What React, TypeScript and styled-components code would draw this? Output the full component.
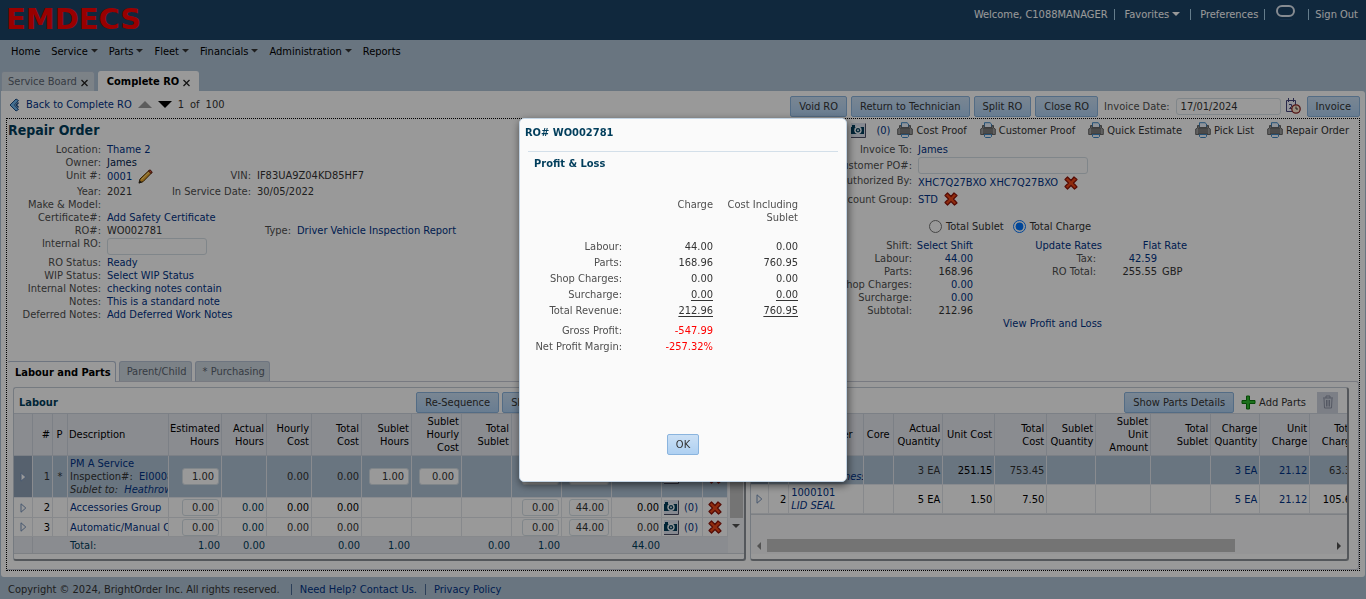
import React from "react";
import styled, { createGlobalStyle, css } from "styled-components";

const GlobalStyle = createGlobalStyle`
  * { box-sizing: border-box; }
  body {
    margin: 0;
    background: #afc3d6;
    color: #333;
    font-family: "DejaVu Sans Condensed", "Noto Sans", "Liberation Sans", sans-serif;
    font-size: 11px;
    line-height: 13px;
  }
  input, button { font: inherit; color: inherit; }
  svg { display: block; flex: none; }
  table { border-collapse: separate; border-spacing: 0; }
`;

const INK = "#333333";
const LINK = "#003286";
const HEADING = "#003d5b";

/* ---------- shared parts ---------- */

const Link = styled.a<{ $tone?: string }>`
  color: ${(p) => p.$tone ?? LINK};
  text-decoration: none;
  white-space: nowrap;
`;

const Button = styled.button`
  height: 21px;
  padding: 0 8px;
  border: 1px solid #8ab4de;
  border-radius: 2px;
  background: linear-gradient(#cbe0f5, #aed0f2);
  color: ${INK};
  white-space: nowrap;
`;

const IconButton = styled.button`
  display: inline-flex;
  padding: 0;
  border: 0;
  background: none;
`;

const TextBox = styled.input<{ $width: number; $right?: boolean }>`
  width: ${(p) => p.$width}px;
  height: 17px;
  padding: 0 4px;
  border: 1px solid #d6dfe6;
  border-radius: 3px;
  background: #fff;
  color: ${INK};
  text-align: ${(p) => (p.$right ? "right" : "left")};
  vertical-align: top;
`;

/* ---------- icons ---------- */

const Printer = () => (
  <svg width="16" height="16" viewBox="0 0 16 16">
    <path d="M4.500 6V.7h5.500L11.500 2v4z" fill="#eef6ff" stroke="#3f88c5" />
    <path d="M2.500 3.500h1.500v2h8v-2h1.500V6l1.800 1v5.500H.7V7l1.800-1z" fill="#a3a3a3" stroke="#666" />
    <path d="M3 6h10v6H3z" fill="#6f6f6f" />
    <path d="M3 8h10M3 10h10" stroke="#8f8f8f" />
    <path d="M4.500 12.500h7v2l-1 1h-5l-1-1z" fill="#f3f9ff" stroke="#3f88c5" />
  </svg>
);

const Camera = () => (
  <svg width="15" height="15" viewBox="0 0 15 15">
    <path d="M0 0h14v14h-14z" fill="#dfe5f0" />
    <path d="M0 14.500h14.500v-14" fill="none" stroke="#4c4f66" />
    <path d="M0 4h1V2h3v2h9v7H0z" fill="#003d5b" />
    <circle cx="7" cy="7.300" r="3.700" fill="#f3f7fb" />
    <circle cx="7" cy="7.300" r="2.200" fill="#003d5b" />
    <circle cx="7" cy="7.300" r="1" fill="#dce8f0" />
  </svg>
);

const RedCross = () => (
  <svg width="14" height="14" viewBox="0 0 14 14">
    <path
      d="M3.500 1L7 4.500 10 1l3 2.500L9.500 7l3.500 4-2.500 2L7 9.500 3.500 13 1 10.500 4.500 7 1 3.500z"
      fill="#f04a1a"
      stroke="#8e1208"
      strokeWidth="1.200"
      strokeLinejoin="round"
    />
  </svg>
);

const Pencil = () => (
  <svg width="15" height="15" viewBox="0 0 15 15">
    <path d="M1 14l1-4L11 1.500 13.500 4 5 12.700z" fill="#f0ab2d" stroke="#4b2f05" />
    <path d="M10.500 2L12 .8 14.300 3 13 4.500z" fill="#d8563a" stroke="#5b1a0c" />
    <path d="M3.500 10.500L11 3.300" stroke="#ffe28a" />
    <path d="M.7 14.500l1-3L4 13.300z" fill="#222" />
  </svg>
);

const CalendarClock = () => (
  <svg width="16" height="16" viewBox="0 0 16 16">
    <path d="M1.500 2.500h9v11h-9z" fill="#f5f5ff" stroke="#44447c" />
    <path d="M3.500 0v4M8.500 0v4" stroke="#44447c" />
    <path d="M4 6.500h2.500v2L4.500 10.500H7" fill="none" stroke="#44447c" />
    <circle cx="11" cy="11" r="4.200" fill="#ffe9d2" stroke="#8c2424" strokeWidth="1.300" />
    <path d="M11 8.500V11h2" fill="none" stroke="#333" />
  </svg>
);

const BackArrow = () => (
  <svg width="11" height="14" viewBox="0 0 11 14">
    <path d="M7 1L1 7l6 6 2.500-1.500L5.500 7l4-4.500z" fill="#6fb7f0" stroke="#1c4f88" />
    <path d="M9.500 4.500L7.300 7l2.200 2.500" fill="none" stroke="#1c4f88" strokeWidth="1.500" />
  </svg>
);

const Plus = () => (
  <svg width="15" height="15" viewBox="0 0 15 15">
    <path d="M5.500 1h3v4.500H14v3H8.500V14h-3V8.500H1v-3h4.500z" fill="#2fbb2f" stroke="#0b7a0b" />
  </svg>
);

const Bin = () => (
  <svg width="12" height="14" viewBox="0 0 12 14" fill="none" stroke="#8d93a5">
    <path d="M1 3h10M4 3V1h4v2M2 3.500l.5 9.500h7l.5-9.500M4.500 5v6.500M6 5v6.500M7.500 5v6.500" />
  </svg>
);

const Bubble = () => (
  <svg width="20" height="18" viewBox="0 0 20 18" fill="none">
    <rect x="1" y="1" width="17" height="10" rx="5" stroke="#dfe8f2" strokeWidth="2" />
    <path d="M4 14.500h12" stroke="#26507a" />
  </svg>
);

const Cross = () => (
  <svg width="7" height="11" viewBox="0 0 7 11">
    <path d="M.5 4l6 6M6.500 4l-6 6" stroke="#222" strokeWidth="1.300" />
  </svg>
);

type Dir = "up" | "down" | "left" | "right";
const points: Record<Dir, string> = {
  up: "0,8 16,8 8,0",
  down: "0,0 16,0 8,8",
  left: "8,0 8,16 0,8",
  right: "0,0 0,16 8,8",
};
const Arrow = ({ dir, size, fill }: { dir: Dir; size: number; fill: string }) => {
  const flat = dir === "up" || dir === "down";
  return (
    <svg
      width={flat ? size : size / 2}
      height={flat ? size / 2 : size}
      viewBox={flat ? "0 0 16 8" : "0 0 8 16"}
    >
      <polygon points={points[dir]} fill={fill} />
    </svg>
  );
};

const Disclosure = () => (
  <svg width="7" height="10" viewBox="0 0 7 10">
    <path d="M1 .8L5.800 5 1 9.200z" fill="#fff" stroke="#7590b8" />
  </svg>
);

/* ---------- frame ---------- */

const Page = styled.div`
  display: flex;
  flex-direction: column;
  min-height: 100vh;
`;

const TopBar = styled.header`
  display: flex;
  justify-content: space-between;
  height: 40px;
  padding: 0 8px 0 6px;
  background: #1c4367;
`;

const Logo = styled.div`
  color: #f00;
  font-family: "DejaVu Sans", sans-serif;
  font-size: 29px;
  font-weight: bold;
  line-height: 38px;
`;

const Account = styled.div`
  display: flex;
  align-items: center;
  gap: 6px;
  height: 28px;
  color: #fff;
`;

const Bar = styled.span<{ $tone?: string }>`
  width: 1px;
  height: 11px;
  background: ${(p) => p.$tone ?? "#a9d0ea"};
`;

const MenuItem = styled.a`
  display: flex;
  align-items: center;
  gap: 3px;
  color: inherit;
  text-decoration: none;
  white-space: nowrap;
`;

const Nav = styled.nav`
  display: flex;
  align-items: center;
  gap: 11px;
  height: 22px;
  padding: 0 11px;
  color: #000;
`;

const PageTabs = styled.div`
  display: flex;
  gap: 3px;
  margin-top: 9px;
  padding-left: 1px;
`;

const Tab = styled.button<{ $active?: boolean }>`
  display: flex;
  align-items: center;
  gap: 4px;
  height: 20px;
  padding: 0 6px;
  border: 1px solid #b5c4d6;
  border-bottom: 0;
  border-radius: 3px 3px 0 0;
  background: #cfd9e1;
  color: #5b6470;
  white-space: nowrap;
  ${(p) =>
    p.$active &&
    css`
      padding: 0 8px;
      border-color: #fff;
      background: #fff;
      color: #000;
      font-weight: bold;
    `}
`;

const SubTab = styled(Tab)`
  padding: 0 4px 0 7px;
  border-color: #b8c4d6;
  ${(p) =>
    p.$active &&
    css`
      height: 21px;
      margin-bottom: -1px;
      border-left-color: #fff;
    `}
`;

const Sheet = styled.main`
  flex: 1;
  margin: 0 1px;
  padding: 0 5px 6px;
  border-radius: 0 3px 3px 3px;
  background: #fff;
`;

const ActionRow = styled.div`
  display: flex;
  align-items: center;
  justify-content: space-between;
  height: 27px;
  padding-left: 3px;
`;

const Group = styled.div<{ $gap: number; $lead?: number }>`
  display: flex;
  align-items: center;
  gap: ${(p) => p.$gap}px;
  margin-left: ${(p) => p.$lead ?? 0}px;
`;

const Actions = styled(Group)`
  padding-top: 3px;
`;

const FieldLabel = styled.label`
  color: #4f4f4f;
  white-space: nowrap;
`;

const OrderBox = styled.section`
  border: 1px dotted #000;
`;

/* ---------- order summary ---------- */

const Summary = styled.div`
  display: flex;
  justify-content: space-between;
  min-height: 242px;
`;

const Column = styled.div<{ $width?: number }>`
  ${(p) => (p.$width ? `flex: none; width: ${p.$width}px;` : "flex: 1;")}
`;

const Title = styled.h1`
  margin: 0;
  padding: 0 0 2px 1px;
  color: ${HEADING};
  font-size: 14px;
  line-height: 22px;
`;

const Row = styled.div<{ $label: number; $tall?: number }>`
  display: grid;
  grid-template-columns: ${(p) => p.$label}px 1fr;
  column-gap: 6px;
  min-height: ${(p) => p.$tall ?? 13}px;
`;

const RowLabel = styled.span<{ $middle?: boolean }>`
  align-self: ${(p) => (p.$middle ? "center" : "start")};
  color: #4f4f4f;
  text-align: right;
  white-space: nowrap;
`;

const RowValue = styled.div<{ $middle?: boolean }>`
  display: flex;
  align-items: ${(p) => (p.$middle ? "center" : "flex-start")};
  gap: 6px;
  white-space: nowrap;
`;

const Cell = styled.span<{ $width: number; $right?: boolean; $tone?: string }>`
  display: flex;
  align-items: center;
  gap: 6px;
  width: ${(p) => p.$width}px;
  justify-content: ${(p) => (p.$right ? "flex-end" : "flex-start")};
  color: ${(p) => p.$tone ?? INK};
`;

const PrintBar = styled.div`
  display: flex;
  align-items: center;
  justify-content: flex-end;
  gap: 13px;
  height: 24px;
  padding: 0 10px 2px 0;
`;

const PrintLink = styled.a`
  display: flex;
  align-items: center;
  gap: 3px;
  color: ${INK};
  text-decoration: none;
  white-space: nowrap;
`;

const Radios = styled.div`
  display: flex;
  gap: 9px;
  padding: 13px 0 6px 116px;
  color: ${INK};

  label { display: flex; align-items: center; gap: 4px; height: 13px; }
  input { width: 13px; height: 13px; margin: 0; accent-color: #0075ff; }
`;

const Totals = styled.table`
  table-layout: fixed;
  width: 374px;

  td { padding: 0; text-align: right; white-space: nowrap; height: 13px; color: ${INK}; }
  td:first-child, td.label { color: #4f4f4f; }
  td.link { color: ${LINK}; }
  td.unit { padding-left: 5px; text-align: left; }
`;

/* ---------- labour and parts ---------- */

const SubTabs = styled.div`
  display: flex;
  gap: 3px;
  position: relative;
  z-index: 0;
`;

const TabBox = styled.div`
  display: flex;
  gap: 4px;
  padding: 5px 9px 8px 6px;
  border: 1px solid #c8ccd8;
  border-left: 0;
  border-radius: 0 3px 3px 0;
`;

const Panel = styled.section<{ $grow: number }>`
  flex: ${(p) => p.$grow} 1 0;
  min-width: 0;
  padding-bottom: 5px;
  overflow: hidden;
  border: 1px solid #c4ccd6;
  border-right: 2px solid #8d9298;
  border-bottom: 2px solid #8d9298;
  border-radius: 3px;
`;

const PanelHead = styled.div`
  display: flex;
  align-items: center;
  justify-content: space-between;
  height: 25px;
  padding: 3px 9px 0 5px;

  h2 { margin: 0; color: ${HEADING}; font-size: 11px; }
`;

const BinButton = styled.button`
  display: flex;
  align-items: center;
  justify-content: center;
  width: 21px;
  height: 21px;
  padding: 0;
  border: 0;
  background: #cfd4e0;
`;

const GridArea = styled.div`
  display: flex;
  overflow: hidden;
  border-bottom: 1px solid #d0d5dd;
`;

const Grid = styled.table<{ $width: number }>`
  flex: none;
  table-layout: fixed;
  width: ${(p) => p.$width}px;
`;

const Th = styled.th<{ $width: number; $align?: string }>`
  width: ${(p) => p.$width}px;
  height: 43px;
  padding: 0 2px 0 1px;
  border: solid #cfd6df;
  border-width: 1px 1px 1px 0;
  background: #e7e9f0;
  color: #000;
  font-weight: normal;
  text-align: ${(p) => p.$align ?? "right"};
`;

const Tr = styled.tr<{ $height: number; $kind?: "selected" | "total" }>`
  height: ${(p) => p.$height}px;
  ${(p) => p.$kind === "selected" && "background: #afc3d6;"}
  ${(p) => p.$kind === "total" && "background: #e7e9f0;"}
  td { border-color: ${(p) => (p.$kind === "selected" ? "#e4e8ee" : "#e2e5ea")}; }
  ${(p) =>
    p.$kind === "total" &&
    css`
      td { border: 0; color: ${HEADING}; }
      td:first-child { border-right: 1px solid #d3d8df; }
    `}
  ${(p) => p.$kind === "selected" && "td:first-child { background: #8fa2b8; }"}
`;

const Td = styled.td<{ $align?: string; $tone?: string }>`
  padding: 0 2px;
  overflow: hidden;
  border: solid;
  border-width: 0 1px 1px 0;
  color: ${(p) => p.$tone ?? INK};
  text-align: ${(p) => p.$align ?? "right"};
  white-space: nowrap;
  > svg { margin: 0 auto; }
  > button { vertical-align: middle; }
`;

const Italic = styled.span`
  display: block;
  font-style: italic;
`;

const ScrollColumn = styled.div`
  display: flex;
  flex: 1;
  flex-direction: column;
  align-items: center;
  background: #f1f2f5;
`;

const ScrollHead = styled.div`
  width: 100%;
  height: 43px;
  border-top: 1px solid #cfd6df;
  border-bottom: 1px solid #cfd6df;
  background: #e7e9f0;
`;

const VThumb = styled.div`
  width: 13px;
  height: 62px;
  margin-bottom: 6px;
  background: #c1c1c1;
`;

const HScroll = styled.div`
  display: flex;
  align-items: center;
  height: 39px;
  padding: 24px 6px 2px;
  background: #f8f9fa;
`;

const HTrack = styled.div`
  flex: 1;
  margin: 0 6px;
`;

const HThumb = styled.div`
  width: 83%;
  height: 13px;
  background: #c1c1c1;
`;

/* ---------- footer and dialog ---------- */

const Footer = styled.footer`
  display: flex;
  align-items: center;
  gap: 8px;
  height: 22px;
  padding: 3px 8px 0;
  color: #333;
`;

const Backdrop = styled.div`
  position: fixed;
  inset: 0;
  display: flex;
  align-items: center;
  justify-content: center;
  background: rgba(0, 0, 0, 0.4);
`;

const Dialog = styled.div`
  display: flex;
  flex-direction: column;
  width: 328px;
  height: 364px;
  padding: 0 8px;
  border: 1px solid #c3d4e4;
  border-radius: 5px;
  background: #fafafa;
  box-shadow: 1px 3px 8px rgba(0, 0, 0, 0.6);
`;

const DialogTitle = styled.h2`
  margin: 0 0 4px -3px;
  color: ${HEADING};
  font-size: 11px;
  line-height: 28px;
`;

const DialogHeading = styled.h3`
  margin: 0 0 28px;
  padding: 5px 6px 0;
  border-top: 1px solid #d3dfe9;
  color: ${HEADING};
  font-size: 11px;
  line-height: 13px;
`;

const PLTable = styled.table`
  table-layout: fixed;
  width: 270px;

  th, td { padding: 0; height: 16px; text-align: right; font-weight: normal; white-space: nowrap; }
  th { color: #4f4f4f; }
  thead th { height: 41px; vertical-align: top; }
  .gap > * { padding-top: 4px; height: 20px; }
  .line { text-decoration: underline; text-underline-offset: 2px; }
  .loss { color: #f00; }
`;

const DialogFoot = styled.div`
  display: flex;
  justify-content: center;
  margin-top: auto;
  padding-bottom: 26px;
`;

/* ---------- data ---------- */

const menus: [string, boolean][] = [
  ["Home", false],
  ["Service", true],
  ["Parts", true],
  ["Fleet", true],
  ["Financials", true],
  ["Administration", true],
  ["Reports", false],
];

const labourCols: [string, number, string?][] = [
  ["", 19],
  ["#", 20],
  ["P", 15, "center"],
  ["Description", 101, "left"],
  ["Estimated Hours", 53],
  ["Actual Hours", 45],
  ["Hourly Cost", 45],
  ["Total Cost", 50],
  ["Sublet Hours", 50],
  ["Sublet Hourly Cost", 50],
  ["Total Sublet", 50],
  ["Charge Hours", 50],
  ["Hourly Charge", 50],
  ["Total Charge", 50],
  ["", 41],
  ["", 25],
];

const partCols: [string, number, string?][] = [
  ["", 18],
  ["#", 20],
  ["Part Number", 75, "left"],
  ["Core", 30, "center"],
  ["Actual Quantity", 49],
  ["Unit Cost", 52],
  ["Total Cost", 52],
  ["Sublet Quantity", 49],
  ["Sublet Unit Amount", 55],
  ["Total Sublet", 60],
  ["Charge Quantity", 49],
  ["Unit Charge", 50],
  ["Total Charge", 50],
];

const Head = ({ cols }: { cols: [string, number, string?][] }) => (
  <thead>
    <tr>
      {cols.map(([text, width, align], i) => (
        <Th key={i} $width={width} $align={align}>
          {text}
        </Th>
      ))}
    </tr>
  </thead>
);

const Attach = () => (
  <Group $gap={5}>
    <Camera />
    <Link href="#">(0)</Link>
  </Group>
);

const Delete = () => (
  <IconButton aria-label="Delete">
    <RedCross />
  </IconButton>
);

const Hours = ({ value, width, name }: { value: string; width: number; name: string }) => (
  <TextBox $width={width} $right defaultValue={value} aria-label={name} />
);

const GroupRow = ({ n, text, height, dark }: { n: string; text: string; height: number; dark?: boolean }) => {
  const tone = dark ? "#000" : INK;
  return (
    <Tr $height={height}>
      <Td><Disclosure /></Td>
      <Td $tone="#000">{n}</Td>
      <Td />
      <Td $align="left"><Link href="#">{text}</Link></Td>
      <Td><Hours value="0.00" width={37} name="Estimated hours" /></Td>
      <Td $tone={HEADING}>0.00</Td>
      <Td $tone={tone}>0.00</Td>
      <Td $tone={tone}>0.00</Td>
      <Td />
      <Td />
      <Td />
      <Td><Hours value="0.00" width={37} name="Charge hours" /></Td>
      <Td><Hours value="44.00" width={40} name="Hourly charge" /></Td>
      <Td $tone={tone}>0.00</Td>
      <Td><Attach /></Td>
      <Td $align="center"><Delete /></Td>
    </Tr>
  );
};

const LabourPanel = () => (
  <Panel $grow={733}>
    <PanelHead>
      <h2>Labour</h2>
      <Group $gap={3}>
        <Button>Re-Sequence</Button>
        <Group $gap={9}>
          <Button>Show Labour Details</Button>
          <Group $gap={3}>
            <Plus />
            <Link href="#" $tone={INK}>Add Labour</Link>
          </Group>
          <BinButton aria-label="Delete labour"><Bin /></BinButton>
        </Group>
      </Group>
    </PanelHead>
    <GridArea>
      <Grid $width={714}>
        <Head cols={labourCols} />
        <tbody>
          <Tr $height={42} $kind="selected">
            <Td><Disclosure /></Td>
            <Td>1</Td>
            <Td $align="center">*</Td>
            <Td $align="left">
              <Link href="#">PM A Service</Link>
              <br />
              Inspection#:&nbsp; <Link href="#">EI000812</Link>
              <Italic>
                Sublet to:&nbsp; <Link href="#">Heathrow</Link>
              </Italic>
            </Td>
            <Td><Hours value="1.00" width={37} name="Estimated hours" /></Td>
            <Td />
            <Td>0.00</Td>
            <Td>0.00</Td>
            <Td><Hours value="1.00" width={40} name="Sublet hours" /></Td>
            <Td><Hours value="0.00" width={40} name="Sublet hourly cost" /></Td>
            <Td />
            <Td><Hours value="1.00" width={37} name="Charge hours" /></Td>
            <Td><Hours value="44.00" width={40} name="Hourly charge" /></Td>
            <Td>44.00</Td>
            <Td><Attach /></Td>
            <Td $align="center"><Delete /></Td>
          </Tr>
          <GroupRow n="2" text="Accessories Group" height={20} dark />
          <GroupRow n="3" text="Automatic/Manual Chassis" height={19} />
          <Tr $height={16} $kind="total">
            <Td />
            <Td />
            <Td />
            <Td $align="left">Total:</Td>
            <Td>1.00</Td>
            <Td>0.00</Td>
            <Td />
            <Td>0.00</Td>
            <Td>1.00</Td>
            <Td />
            <Td>0.00</Td>
            <Td>1.00</Td>
            <Td />
            <Td>44.00</Td>
            <Td />
            <Td />
          </Tr>
        </tbody>
      </Grid>
      <ScrollColumn aria-hidden>
        <ScrollHead />
        <VThumb />
        <Arrow dir="down" size={8} fill="#505050" />
      </ScrollColumn>
    </GridArea>
  </Panel>
);

const PartsPanel = () => (
  <Panel $grow={598}>
    <PanelHead>
      <h2>Parts</h2>
      <Group $gap={11}>
        <Group $gap={7}>
          <Button>Show Parts Details</Button>
          <Group $gap={3}>
            <Plus />
            <Link href="#" $tone={INK}>Add Parts</Link>
          </Group>
        </Group>
        <BinButton aria-label="Delete parts"><Bin /></BinButton>
      </Group>
    </PanelHead>
    <GridArea>
      <Grid $width={609}>
        <Head cols={partCols} />
        <tbody>
          <Tr $height={29} $kind="selected">
            <Td><Disclosure /></Td>
            <Td>1</Td>
            <Td $align="left" $tone={LINK}>
              1000100
              <Italic>Wiring Harness</Italic>
            </Td>
            <Td />
            <Td>3 EA</Td>
            <Td $tone="#000">251.15</Td>
            <Td>753.45</Td>
            <Td />
            <Td />
            <Td />
            <Td $tone={LINK}>3 EA</Td>
            <Td $tone={LINK}>21.12</Td>
            <Td>63.36</Td>
          </Tr>
          <Tr $height={29}>
            <Td><Disclosure /></Td>
            <Td $tone="#000">2</Td>
            <Td $align="left">
              <Link href="#">1000101</Link>
              <Italic><Link href="#">LID SEAL</Link></Italic>
            </Td>
            <Td />
            <Td $tone="#000">5 EA</Td>
            <Td $tone="#000">1.50</Td>
            <Td $tone="#000">7.50</Td>
            <Td />
            <Td />
            <Td />
            <Td $tone={LINK}>5 EA</Td>
            <Td $tone={LINK}>21.12</Td>
            <Td $tone="#000">105.60</Td>
          </Tr>
        </tbody>
      </Grid>
    </GridArea>
    <HScroll aria-hidden>
      <Arrow dir="left" size={8} fill="#8a8a8a" />
      <HTrack><HThumb /></HTrack>
      <Arrow dir="right" size={8} fill="#505050" />
    </HScroll>
  </Panel>
);

const OrderDetails = () => (
  <Column>
    <Title>Repair Order</Title>
    <Row $label={94}>
      <RowLabel>Location:</RowLabel>
      <RowValue><Link href="#">Thame 2</Link></RowValue>
    </Row>
    <Row $label={94}>
      <RowLabel>Owner:</RowLabel>
      <RowValue><Link href="#" $tone="#001d4e">James</Link></RowValue>
    </Row>
    <Row $label={94} $tall={16}>
      <RowLabel>Unit #:</RowLabel>
      <RowValue>
        <Cell $width={55}>
          <Link href="#">0001</Link>
          <IconButton aria-label="Edit unit"><Pencil /></IconButton>
        </Cell>
        <Cell $width={83} $right $tone="#4f4f4f">VIN:</Cell>
        <span>IF83UA9Z04KD85HF7</span>
      </RowValue>
    </Row>
    <Row $label={94}>
      <RowLabel>Year:</RowLabel>
      <RowValue>
        <Cell $width={55}>2021</Cell>
        <Cell $width={83} $right $tone="#4f4f4f">In Service Date:</Cell>
        <span>30/05/2022</span>
      </RowValue>
    </Row>
    <Row $label={94}>
      <RowLabel>Make &amp; Model:</RowLabel>
    </Row>
    <Row $label={94}>
      <RowLabel>Certificate#:</RowLabel>
      <RowValue><Link href="#">Add Safety Certificate</Link></RowValue>
    </Row>
    <Row $label={94}>
      <RowLabel>RO#:</RowLabel>
      <RowValue>
        <Cell $width={95}>WO002781</Cell>
        <Cell $width={83} $right $tone="#4f4f4f">Type:</Cell>
        <Link href="#">Driver Vehicle Inspection Report</Link>
      </RowValue>
    </Row>
    <Row $label={94} $tall={19}>
      <RowLabel as="label" htmlFor="internal-ro">Internal RO:</RowLabel>
      <RowValue $middle><TextBox id="internal-ro" $width={100} /></RowValue>
    </Row>
    {[
      ["RO Status:", "Ready"],
      ["WIP Status:", "Select WIP Status"],
      ["Internal Notes:", "checking notes contain"],
      ["Notes:", "This is a standard note"],
      ["Deferred Notes:", "Add Deferred Work Notes"],
    ].map(([label, value]) => (
      <Row key={label} $label={94}>
        <RowLabel>{label}</RowLabel>
        <RowValue><Link href="#">{value}</Link></RowValue>
      </Row>
    ))}
  </Column>
);

const InvoiceDetails = () => (
  <Column $width={546}>
    <PrintBar>
      <Group $gap={7}>
        <Group $gap={10}>
          <Camera />
          <Link href="#">(0)</Link>
        </Group>
        <PrintLink href="#"><Printer />Cost Proof</PrintLink>
      </Group>
      {["Customer Proof", "Quick Estimate", "Pick List", "Repair Order"].map((text) => (
        <PrintLink key={text} href="#"><Printer />{text}</PrintLink>
      ))}
    </PrintBar>
    <Row $label={99}>
      <RowLabel>Invoice To:</RowLabel>
      <RowValue><Link href="#">James</Link></RowValue>
    </Row>
    <Row $label={99} $tall={18}>
      <RowLabel as="label" $middle htmlFor="customer-po">Customer PO#:</RowLabel>
      <RowValue $middle><TextBox id="customer-po" $width={170} /></RowValue>
    </Row>
    <Row $label={99} $tall={17}>
      <RowLabel>Authorized By:</RowLabel>
      <RowValue $middle>
        <Link href="#">XHC7Q27BXO XHC7Q27BXO</Link>
        <Delete />
      </RowValue>
    </Row>
    <Row $label={99} $tall={16}>
      <RowLabel $middle>Account Group:</RowLabel>
      <RowValue $middle>
        <Link href="#">STD</Link>
        <Delete />
      </RowValue>
    </Row>
    <Radios>
      <label><input type="radio" name="total" />Total Sublet</label>
      <label><input type="radio" name="total" defaultChecked />Total Charge</label>
    </Radios>
    <Totals>
      <colgroup>
        <col style={{ width: 99 }} />
        <col style={{ width: 61 }} />
        <col style={{ width: 123 }} />
        <col style={{ width: 6 }} />
        <col style={{ width: 55 }} />
        <col style={{ width: 30 }} />
      </colgroup>
      <tbody>
        <tr>
          <td>Shift:</td>
          <td><Link href="#">Select Shift</Link></td>
          <td colSpan={2}><Link href="#">Update Rates</Link></td>
          <td colSpan={2}><Link href="#">Flat Rate</Link></td>
        </tr>
        <tr>
          <td>Labour:</td>
          <td className="link">44.00</td>
          <td className="label">Tax:</td>
          <td />
          <td className="link">42.59</td>
          <td />
        </tr>
        <tr>
          <td>Parts:</td>
          <td>168.96</td>
          <td className="label">RO Total:</td>
          <td />
          <td>255.55</td>
          <td className="unit">GBP</td>
        </tr>
        <tr>
          <td>Shop Charges:</td>
          <td className="link">0.00</td>
        </tr>
        <tr>
          <td>Surcharge:</td>
          <td className="link">0.00</td>
        </tr>
        <tr>
          <td>Subtotal:</td>
          <td>212.96</td>
        </tr>
        <tr>
          <td />
          <td />
          <td colSpan={2}><Link href="#">View Profit and Loss</Link></td>
        </tr>
      </tbody>
    </Totals>
  </Column>
);

const ProfitDialog = () => (
  <Backdrop>
    <Dialog role="dialog" aria-modal="true" aria-labelledby="pl-title">
      <DialogTitle id="pl-title">RO# WO002781</DialogTitle>
      <DialogHeading>Profit &amp; Loss</DialogHeading>
      <PLTable>
        <colgroup>
          <col style={{ width: 94 }} />
          <col style={{ width: 91 }} />
          <col style={{ width: 85 }} />
        </colgroup>
        <thead>
          <tr>
            <th />
            <th>Charge</th>
            <th>Cost Including<br />Sublet</th>
          </tr>
        </thead>
        <tbody>
          <tr><th>Labour:</th><td>44.00</td><td>0.00</td></tr>
          <tr><th>Parts:</th><td>168.96</td><td>760.95</td></tr>
          <tr><th>Shop Charges:</th><td>0.00</td><td>0.00</td></tr>
          <tr><th>Surcharge:</th><td className="line">0.00</td><td className="line">0.00</td></tr>
          <tr><th>Total Revenue:</th><td className="line">212.96</td><td className="line">760.95</td></tr>
          <tr className="gap"><th>Gross Profit:</th><td className="loss">-547.99</td><td /></tr>
          <tr><th>Net Profit Margin:</th><td className="loss">-257.32%</td><td /></tr>
        </tbody>
      </PLTable>
      <DialogFoot>
        <Button>OK</Button>
      </DialogFoot>
    </Dialog>
  </Backdrop>
);

export default function App() {
  return (
    <>
      <GlobalStyle />
      <Page>
        <TopBar>
          <Logo>EMDECS</Logo>
          <Account>
            <span>Welcome, C1088MANAGER</span>
            <Bar />
            <Group $gap={10} $lead={4}>
              <MenuItem href="#">Favorites <Arrow dir="down" size={8} fill="#fff" /></MenuItem>
              <Bar />
            </Group>
            <Group $gap={6} $lead={3}>
              <MenuItem href="#">Preferences</MenuItem>
              <Bar />
            </Group>
            <Group $gap={12} $lead={5}>
              <MenuItem href="#" aria-label="Messages"><Bubble /></MenuItem>
              <Bar />
            </Group>
            <MenuItem href="#">Sign Out</MenuItem>
          </Account>
        </TopBar>
        <Nav>
          {menus.map(([text, drop]) => (
            <MenuItem key={text} href="#">
              {text}
              {drop && <Arrow dir="down" size={7} fill="#333" />}
            </MenuItem>
          ))}
        </Nav>
        <PageTabs>
          <Tab>Service Board <Cross /></Tab>
          <Tab $active>Complete RO <Cross /></Tab>
        </PageTabs>
        <Sheet>
          <ActionRow>
            <Group $gap={6}>
              <BackArrow />
              <Link href="#">Back to Complete RO</Link>
              <Arrow dir="up" size={14} fill="#999" />
              <Arrow dir="down" size={14} fill="#000" />
              <span>1</span>
              <span>of</span>
              <span>100</span>
            </Group>
            <Actions $gap={6}>
              <Group $gap={4}>
                <Button>Void RO</Button>
                <Button>Return to Technician</Button>
                <Button>Split RO</Button>
                <Button>Close RO</Button>
              </Group>
              <FieldLabel htmlFor="invoice-date">Invoice Date:</FieldLabel>
              <Group $gap={4}>
                <TextBox id="invoice-date" $width={105} defaultValue="17/01/2024" />
                <IconButton aria-label="Pick date"><CalendarClock /></IconButton>
              </Group>
              <Button>Invoice</Button>
            </Actions>
          </ActionRow>
          <OrderBox>
            <Summary>
              <OrderDetails />
              <InvoiceDetails />
            </Summary>
            <SubTabs>
              <SubTab $active>Labour and Parts</SubTab>
              <SubTab>Parent/Child</SubTab>
              <SubTab>* Purchasing</SubTab>
            </SubTabs>
            <TabBox>
              <LabourPanel />
              <PartsPanel />
            </TabBox>
          </OrderBox>
        </Sheet>
        <Footer>
          <span>Copyright © 2024, BrightOrder Inc. All rights reserved.</span>
          <Group $gap={8} $lead={3}>
            <Bar $tone="#4a6a94" />
            <Link href="#">Need Help? Contact Us.</Link>
          </Group>
          <Bar $tone="#4a6a94" />
          <Link href="#">Privacy Policy</Link>
        </Footer>
      </Page>
      <ProfitDialog />
    </>
  );
}
